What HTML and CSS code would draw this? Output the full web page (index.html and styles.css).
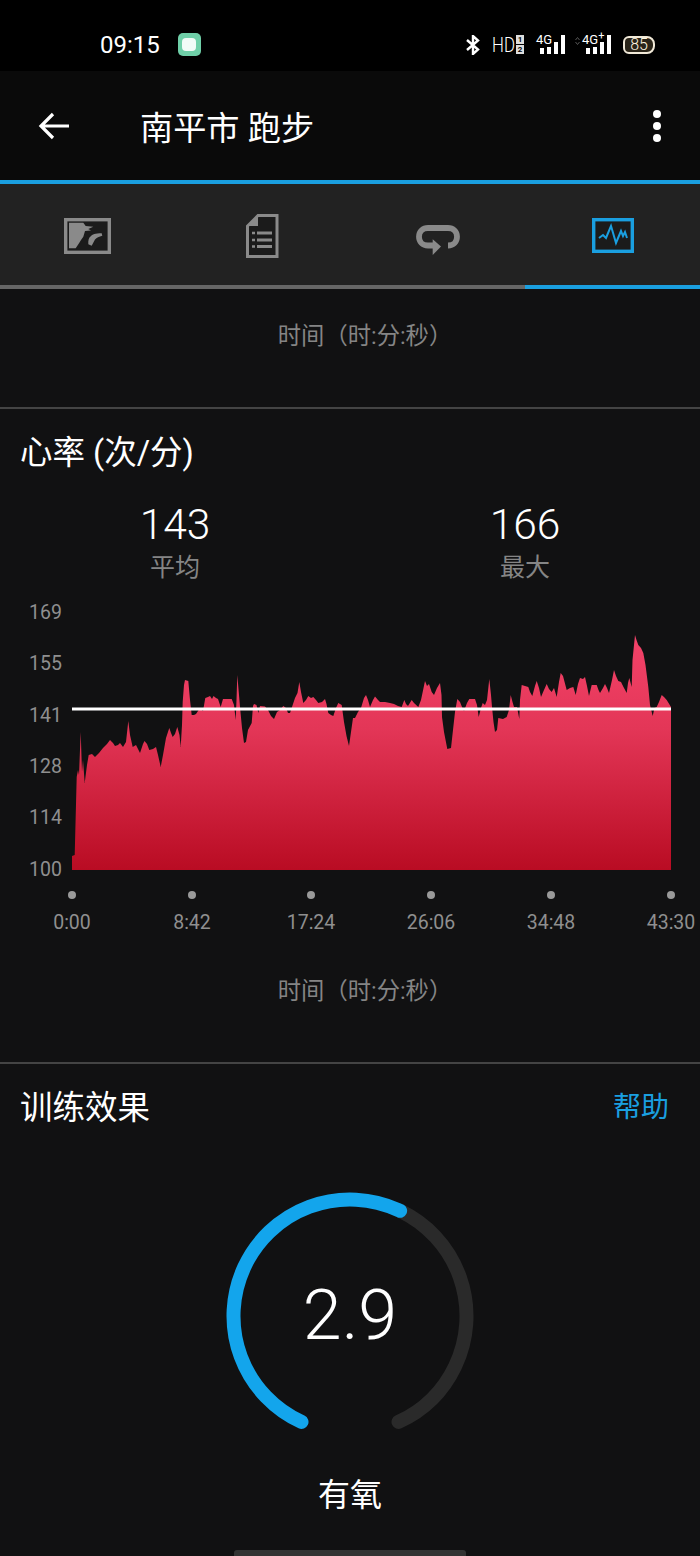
FILE: index.html
```html
<!DOCTYPE html>
<html lang="zh-CN">
<head>
    <meta charset="UTF-8">
    <meta name="viewport" content="width=device-width, initial-scale=1.0">
    <title>南平市 跑步</title>
    <link rel="stylesheet" href="styles.css">
</head>
<body>
    <div class="status-bar">
        <span class="clock">09:15</span>
        <span class="app-dot"><span class="app-dot-inner"></span></span>
        <div class="status-right">
            <svg class="bt-icon" width="14" height="20" viewBox="0 0 14 20">
                <path d="M1 5 L12 14.500 L7 19 V1 L12 5.500 L1 15" fill="none" stroke="#fff" stroke-width="2.400"/>
            </svg>
            <span class="hd">HD</span>
            <span class="sim"><span>1</span><span>2</span></span>
            <span class="signal signal-one">
                <span class="net">4G</span>
                <i class="bar b1"></i><i class="bar b2"></i><i class="bar b3"></i><i class="bar b4"></i>
            </span>
            <span class="signal signal-two">
                <svg class="updown" width="5" height="8" viewBox="0 0 5 8">
                    <path d="M0.500 3 L2.500 0.500 L4.500 3 M0.500 5 L2.500 7.500 L4.500 5" fill="none" stroke="#555" stroke-width="1"/>
                </svg>
                <span class="net">4G<sup>+</sup></span>
                <i class="bar b1"></i><i class="bar b2"></i><i class="bar b3"></i><i class="bar b4"></i>
            </span>
            <span class="battery">85</span>
        </div>
    </div>

    <header class="app-bar">
        <svg class="back" width="32" height="28" viewBox="0 0 32 28">
            <path d="M31 14 H3 M15 2 L3 14 L15 26" fill="none" stroke="#fff" stroke-width="3.200"/>
        </svg>
        <h1 class="title">南平市 跑步</h1>
        <div class="more"><i></i><i></i><i></i></div>
    </header>
    <div class="accent-line"></div>

    <nav class="tabs">
        <div class="tab">
            <svg width="47" height="36" viewBox="0 0 47 36">
                <rect x="1.700" y="1.700" width="43.600" height="32.600" fill="#1b1b1b" stroke="#8a8a8a" stroke-width="3.400"/>
                <path d="M5 4.700 H19.300 L21.700 8 L29.300 8.700 L24.300 11 L27 12.500 L21 13 L19.300 18.700 L17 22 L15 25.300 L11.700 30.300 H5 Z" fill="#8a8a8a"/>
                <path d="M24.300 26.300 C24 22 25 19.500 26.500 18.500 C28.500 16.500 31 15.300 37.700 15.300 L38.300 17.700 C35 18.500 32.700 19.500 31 21.500 L27.700 27.700 Z" fill="#8a8a8a"/>
            </svg>
        </div>
        <div class="tab">
            <svg width="33" height="44" viewBox="0 0 33 44">
                <path d="M12 1.500 H31 V42.500 H1.500 V12 Z" fill="#1b1b1b" stroke="#8a8a8a" stroke-width="3"/>
                <path d="M12 2 V12 H2 Z" fill="#8a8a8a"/>
                <path d="M11 19 H26 M11 26 H26 M11 32.500 H26" stroke="#8a8a8a" stroke-width="3"/>
                <path d="M6 19 H9 M6 26 H9 M6 32.500 H9" stroke="#8a8a8a" stroke-width="2.500"/>
            </svg>
        </div>
        <div class="tab tab-loop">
            <svg width="44" height="30" viewBox="0 0 44 30">
                <path d="M18 20.500 H12 C6.500 20.500 3 16.500 3 11.700 C3 6.500 7 3 12 3 H32 C37 3 41 6.500 41 11.700 C41 16.500 37.500 20.500 32 20.500" fill="none" stroke="#8a8a8a" stroke-width="5.800"/>
                <path d="M16.700 14.300 L25 21.500 L16.700 30 Z" fill="#8a8a8a"/>
            </svg>
        </div>
        <div class="tab">
            <svg width="42" height="35" viewBox="0 0 42 35">
                <rect x="1.700" y="1.700" width="38.600" height="31.600" fill="#1b1b1b" stroke="#1a9fe0" stroke-width="3.400"/>
                <path d="M7 20 L11 17 L14 20 L19 8 L24 25 L29 13 L31 18 L33 14 L35 20" fill="none" stroke="#1a9fe0" stroke-width="2"/>
            </svg>
        </div>
    </nav>
    <div class="tab-track"><div class="tab-active"></div></div>

    <div class="caption caption-top">时间（时:分:秒）</div>

    <section class="card">
        <h2 class="card-title">心率 (次/分)</h2>
        <div class="stats">
            <div class="stat">
                <div class="stat-value">143</div>
                <div class="stat-label">平均</div>
            </div>
            <div class="stat">
                <div class="stat-value">166</div>
                <div class="stat-label">最大</div>
            </div>
        </div>

        <svg class="chart" width="700" height="340" viewBox="0 600 700 340">
            <defs>
                <linearGradient id="hr" gradientUnits="userSpaceOnUse" x1="0" y1="635" x2="0" y2="870">
                    <stop offset="0" stop-color="#f4436a"/>
                    <stop offset="0.4" stop-color="#e33657"/>
                    <stop offset="1" stop-color="#b90c23"/>
                </linearGradient>
            </defs>
            <path fill="url(#hr)" d="M72 870 V856 L74.700 855 L76.700 777 L78 770 L79 775 L80.700 732 L82 772 L83 760 L84.700 783 L87 765 L88.700 755 L92 754 L95 757 L99 753 L103 748 L107 744 L110 740 L113 743 L115 746 L118 745 L120 743 L123 747 L126 742 L128.300 721 L130 735 L132.700 747 L136 745 L138 749 L140 753 L143 744 L144.500 741 L147 744 L149.300 750 L153 749 L156 747 L158 755 L160.700 767 L163 755 L166 738 L169.300 728 L171 733 L172.700 737 L175 734 L177.300 727 L179.500 735 L180.700 747 L182 725 L182.700 702 L184 685 L185 680 L188.300 681 L190 700 L191.700 715 L194 715 L196 714 L198 711 L200 708 L203 711 L205.300 698 L208 697 L210 696 L212 699 L213.500 696 L216 698 L218 699 L220.700 707 L223 699 L228 699 L231.700 699 L234 705 L235.700 720 L236.500 700 L237.300 675 L239 695 L240 707 L242 728 L244 743 L246 742 L248 730 L251.700 723 L253 706 L254 704 L256.500 705 L258.300 713 L260 706 L265 706.500 L268 710 L271 716 L274 719 L277 712 L280 710 L283.300 706 L286 708 L288 713 L290 713 L293 704 L295 698 L297.500 693 L299.300 682 L301 692 L303.300 703 L306 700 L308.300 696 L311 698 L313.300 697 L316 700 L318.300 703 L322 702 L325 699 L326.500 704 L328.300 713 L331 715 L333.300 716 L336 708 L338.300 703 L341.700 705 L344 722 L346.500 736 L349 746 L351 732 L353 718 L355 718 L358 712 L361 708 L364 698 L366 695 L368 700 L370 707 L373 700 L375 696.500 L378 700 L380 702 L385 702 L390 703 L394 704 L398 706 L401.700 707 L404.300 700 L406 704 L408 706 L411.700 700 L414 703 L418.300 707 L421 700 L425 681 L427 686 L429 684 L431.700 692 L434 695 L437 688 L440 683 L441.500 695 L442 717 L444 732 L447.300 749 L451 748 L453 730 L455 712 L457.300 699 L460 702 L462 707 L464 711 L467 703 L469.300 699 L475 699 L477 705 L478.700 717 L481 708 L482.700 703 L485 705 L487 700 L489.300 679 L491 695 L492 707 L493.500 722 L495 732 L497 730 L498.300 718 L503 719 L506.700 717 L509 710 L510.700 695 L512.500 702 L514 707 L517 707 L519.300 719 L520 700 L521.700 685 L525 686 L528.300 687 L530 692 L532.300 696 L535 686 L536.700 681 L539 688 L541 697 L544 690 L546.700 684 L549 689 L551.700 692 L554 688 L556.700 697 L559 682 L560.700 673 L563 676 L566.700 690 L570 688 L573.300 687 L575.700 695 L578 684 L580 678 L583 679 L585 677 L587 686 L589 696 L591.700 685 L596.700 685 L598.500 690 L600 693 L603 688 L605 684 L607 688 L609 693 L612 680 L614 670 L616 676 L618.300 681 L621 682 L624 688 L626.700 693 L628 683 L629.300 678 L631.700 687 L632.500 660 L635 635 L636.500 640 L638.300 645 L641 648 L643.300 653 L645.500 665 L648.300 687 L650 705 L652.700 716 L654.500 708 L656.700 707 L659 702 L661.700 695 L664 697 L666.700 700 L671 707 V870 Z"/>
            <rect x="72" y="707.500" width="599" height="3" fill="#fff"/>

            <g class="axis">
                <text x="62" y="619" text-anchor="end">169</text>
                <text x="62" y="670" text-anchor="end">155</text>
                <text x="62" y="722" text-anchor="end">141</text>
                <text x="62" y="773" text-anchor="end">128</text>
                <text x="62" y="824" text-anchor="end">114</text>
                <text x="62" y="876" text-anchor="end">100</text>
                <text x="72" y="929" text-anchor="middle">0:00</text>
                <text x="192" y="929" text-anchor="middle">8:42</text>
                <text x="311" y="929" text-anchor="middle">17:24</text>
                <text x="431" y="929" text-anchor="middle">26:06</text>
                <text x="551" y="929" text-anchor="middle">34:48</text>
                <text x="671" y="929" text-anchor="middle">43:30</text>
            </g>
            <g fill="#9a9a9a">
                <circle cx="72" cy="895" r="4"/>
                <circle cx="192" cy="895" r="4"/>
                <circle cx="311" cy="895" r="4"/>
                <circle cx="431" cy="895" r="4"/>
                <circle cx="551" cy="895" r="4"/>
                <circle cx="671" cy="895" r="4"/>
            </g>
        </svg>

        <div class="caption caption-chart">时间（时:分:秒）</div>
    </section>

    <section class="card card-effect">
        <div class="effect-head">
            <h2 class="card-title">训练效果</h2>
            <span class="help">帮助</span>
        </div>
        <div class="gauge">
            <svg width="260" height="260" viewBox="0 0 260 260">
                <circle cx="130" cy="130" r="116.500" pathLength="360" fill="none" stroke="#2a2a2a" stroke-width="14" stroke-linecap="round" stroke-dasharray="129.900 230.100" transform="rotate(295.500 130 130)"/>
                <circle cx="130" cy="130" r="116.500" pathLength="360" fill="none" stroke="#13a5ec" stroke-width="14" stroke-linecap="round" stroke-dasharray="180.900 179.100" transform="rotate(114.600 130 130)"/>
            </svg>
            <div class="gauge-value">2.9</div>
        </div>
        <div class="effect-label">有氧</div>
    </section>
    <div class="handle"></div>
</body>
</html>
```

FILE: styles.css
```css
* {
    margin: 0;
    padding: 0;
    box-sizing: border-box;
}

body {
    width: 700px;
    height: 1556px;
    overflow: hidden;
    position: relative;
    background: #111112;
    color: #fff;
    font-family: Roboto, "Noto Sans CJK SC", sans-serif;
}

.status-bar {
    height: 71px;
    background: #000;
    display: flex;
    align-items: center;
    padding: 18px 45px 0 100px;
}

.clock {
    font-size: 24px;
}

.app-dot {
    width: 23px;
    height: 23px;
    margin-left: 18px;
    background: #6fcfa8;
    border-radius: 5px;
    display: flex;
    align-items: center;
    justify-content: center;
}

.app-dot-inner {
    width: 14px;
    height: 13px;
    background: #f2fbf7;
    border-radius: 4px;
}

.status-right {
    margin-left: auto;
    display: flex;
    align-items: center;
}

.bt-icon {
    margin-right: 12px;
}

.hd {
    display: block;
    width: 24px;
    font-size: 21px;
    font-weight: 300;
    line-height: 24px;
    transform: scaleX(0.8);
    transform-origin: left center;
}

.sim {
    display: flex;
    flex-direction: column;
    gap: 1px;
    width: 8px;
}

.sim span {
    background: #ddd;
    color: #000;
    font-size: 8px;
    font-weight: 700;
    line-height: 9px;
    height: 9px;
    text-align: center;
}

.signal {
    position: relative;
    display: flex;
    align-items: flex-end;
    gap: 3px;
    height: 19px;
    padding-left: 4px;
}

.signal-one {
    margin-left: 12px;
}

.signal-two {
    margin-left: 17px;
}

.updown {
    position: absolute;
    left: -7px;
    top: 2px;
}

.net {
    position: absolute;
    left: 0;
    top: -2px;
    font-size: 13px;
    line-height: 14px;
}

.net sup {
    font-size: 11px;
    line-height: 0;
}

.bar {
    display: block;
    width: 4px;
    background: #fff;
}

.b1 { height: 6px; }
.b2 { height: 7px; }
.b3 { height: 12px; }
.b4 { height: 19px; }

.battery {
    margin-left: 12px;
    width: 32px;
    height: 18px;
    border: 2px solid #f1e9d8;
    border-radius: 6px 8px 8px 6px;
    background: #2a2418;
    color: #fff5e0;
    font-size: 16px;
    font-weight: 300;
    line-height: 14px;
    text-align: center;
}

.app-bar {
    height: 109px;
    background: #0a0a0a;
    display: flex;
    align-items: center;
    padding: 0 39px 0 38px;
}

.title {
    margin-left: 70px;
    padding-top: 7px;
    font-size: 33.200px;
    font-weight: 400;
    line-height: 40px;
}

.more {
    margin-left: auto;
    display: flex;
    flex-direction: column;
    gap: 4px;
}

.more i {
    display: block;
    width: 8px;
    height: 8px;
    border-radius: 50%;
    background: #fff;
}

.accent-line {
    height: 4px;
    background: #1a9fe0;
}

.tabs {
    height: 101px;
    background: #222222;
    display: flex;
}

.tab {
    flex: 1;
    display: flex;
    align-items: center;
    justify-content: center;
    padding-top: 2px;
}

.tab-loop {
    padding-top: 10px;
}

.tab-track {
    height: 4px;
    background: #666;
    display: flex;
    justify-content: flex-end;
}

.tab-active {
    width: 25%;
    background: #1a9fe0;
}

.caption {
    color: #858585;
    font-size: 23.300px;
    line-height: 30px;
    text-align: center;
    padding-left: 30px;
}

.caption-top {
    height: 118px;
    padding-top: 32px;
}

.card {
    border-top: 2px solid #444;
    height: 655px;
    padding-top: 22px;
}

.card-title {
    font-size: 32.500px;
    font-weight: 400;
    line-height: 44px;
    padding-left: 20px;
}

.stats {
    display: flex;
    margin-top: 22px;
}

.stat {
    flex: 1;
    text-align: center;
}

.stat-value {
    font-size: 42.500px;
    font-weight: 300;
    line-height: 55px;
}

.stat-label {
    color: #858585;
    font-size: 25px;
    line-height: 32px;
}

.chart {
    display: block;
    margin-top: 16px;
}

.axis text {
    fill: #8f8f8f;
    font-size: 19.500px;
}

.caption-chart {
    margin-top: 36px;
}

.card-effect {
    height: 493px;
    padding-top: 22px;
}

.effect-head {
    display: flex;
    justify-content: space-between;
    align-items: center;
    padding-right: 31px;
}

.help {
    color: #1a9fe0;
    font-size: 28px;
    line-height: 44px;
}

.gauge {
    position: relative;
    width: 260px;
    height: 260px;
    margin: 56px auto 0;
}

.gauge-value {
    position: absolute;
    inset: 0;
    display: flex;
    align-items: center;
    justify-content: center;
    padding-bottom: 2px;
    font-size: 70px;
    font-weight: 300;
}

.effect-label {
    text-align: center;
    font-size: 32px;
    line-height: 44px;
    margin-top: 27px;
}

.handle {
    position: absolute;
    left: 234px;
    bottom: 0;
    width: 232px;
    height: 6px;
    border-radius: 3px 3px 0 0;
    background: #333;
}
```
